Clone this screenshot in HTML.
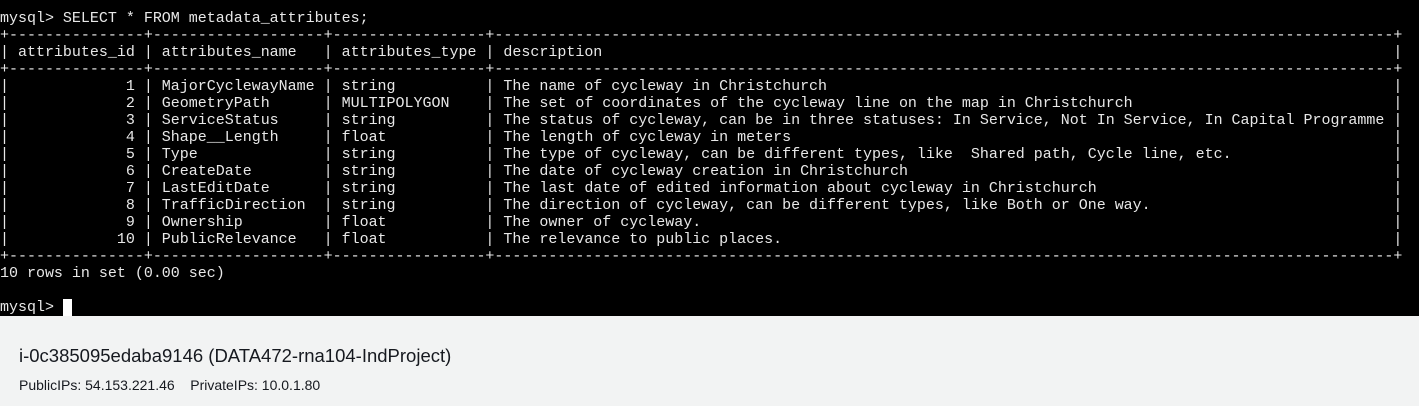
<!DOCTYPE html>
<html><head><meta charset="utf-8"><style>
html,body{margin:0;padding:0;width:1419px;height:406px;overflow:hidden;background:#f2f3f3}
.term{position:absolute;left:0;top:0;width:1419px;height:316px;background:#000;overflow:hidden}
pre{margin:0;padding-top:10px;font-family:"Liberation Mono",monospace;font-size:15px;line-height:17px;letter-spacing:-0.012px;color:#e8e8e8;white-space:pre}
.cur{display:inline-block;width:9px;height:17px;background:#fff;vertical-align:top}
.t1{position:absolute;left:19px;top:345px;font-family:"Liberation Sans",sans-serif;font-size:18.5px;color:#16191f}
.t2{position:absolute;left:19px;top:377px;font-family:"Liberation Sans",sans-serif;font-size:14px;color:#16191f}
</style></head><body>
<div class="term"><pre>mysql&gt; SELECT * FROM metadata_attributes;
+---------------+-------------------+-----------------+----------------------------------------------------------------------------------------------------+
| attributes_id | attributes_name   | attributes_type | description                                                                                        |
+---------------+-------------------+-----------------+----------------------------------------------------------------------------------------------------+
|             1 | MajorCyclewayName | string          | The name of cycleway in Christchurch                                                               |
|             2 | GeometryPath      | MULTIPOLYGON    | The set of coordinates of the cycleway line on the map in Christchurch                             |
|             3 | ServiceStatus     | string          | The status of cycleway, can be in three statuses: In Service, Not In Service, In Capital Programme |
|             4 | Shape__Length     | float           | The length of cycleway in meters                                                                   |
|             5 | Type              | string          | The type of cycleway, can be different types, like  Shared path, Cycle line, etc.                  |
|             6 | CreateDate        | string          | The date of cycleway creation in Christchurch                                                      |
|             7 | LastEditDate      | string          | The last date of edited information about cycleway in Christchurch                                 |
|             8 | TrafficDirection  | string          | The direction of cycleway, can be different types, like Both or One way.                           |
|             9 | Ownership         | float           | The owner of cycleway.                                                                             |
|            10 | PublicRelevance   | float           | The relevance to public places.                                                                    |
+---------------+-------------------+-----------------+----------------------------------------------------------------------------------------------------+
10 rows in set (0.00 sec)

mysql&gt; <span class="cur"></span></pre></div>
<div class="t1">i-0c385095edaba9146 (DATA472-rna104-IndProject)</div>
<div class="t2">PublicIPs: 54.153.221.46&nbsp;&nbsp;&nbsp;&nbsp;PrivateIPs: 10.0.1.80</div>
</body></html>
